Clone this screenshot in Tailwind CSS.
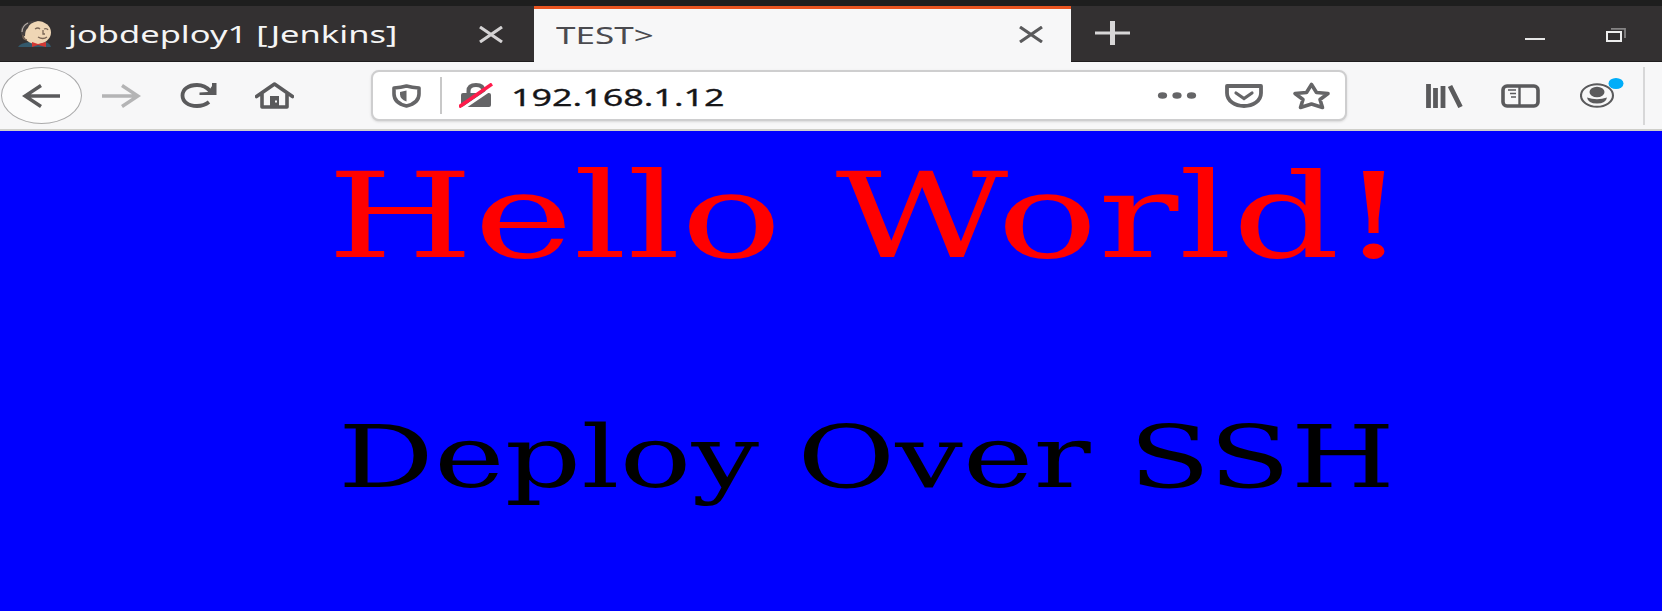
<!DOCTYPE html>
<html lang="en">
<head>
<meta charset="utf-8">
<title>TEST&gt;</title>
<script src="https://cdn.jsdelivr.net/npm/@tailwindcss/browser@4"></script>
</head>
<body class="w-[1662px] h-[611px] overflow-hidden bg-[#0000ff] font-['Noto_Sans',sans-serif] flex flex-col">
<header class="shrink-0 h-[62px] bg-[#333031] border-t-[6px] border-[#1e1e1e] flex">
  <div class="w-[534px] border-b border-[#1f1d1e] flex items-center pl-[18px]">
    <svg class="w-[34px] h-[28px] shrink-0" viewBox="0 0 34 28" preserveAspectRatio="none">
      <path d="M0 27Q2 23 12 22L27 22Q32 23 33 27Z" fill="#33586b"/>
      <ellipse cx="19" cy="12.5" rx="14" ry="11.5" fill="#efd6b5"/>
      <path d="M3 14Q1 5 10 2Q15 0 20 1Q11 3 10 8Q7 10 7 16Q4 17 3 14Z" fill="#454040"/>
      <path d="M4 12Q4 6 10 3" fill="none" stroke="#b5aca6" stroke-width="1.2"/>
      <path d="M5 15Q4 19 9 20M17 9q3-2 5 0M26 9q3-1 4 1M25 10v4h2M20 17q5 3 9 0" fill="none" stroke="#7a6555" stroke-width="1.3"/>
      <path d="M14 22l6 2 8-2v5l-8-2-6 2z" fill="#d33833"/>
    </svg>
    <span class="w-[330px] ml-[16px] mt-[1px] whitespace-nowrap text-[24px] leading-[32px] text-[#f5f5f5]"><span class="inline-block origin-left scale-x-[1.437]">jobdeploy1 [Jenkins]</span></span>
    <svg class="ml-[81px] mt-[1px] w-[24px] h-[17px] shrink-0" viewBox="0 0 24 17"><path d="M1 1L23 16M23 1L1 16" stroke="#d4d2d3" stroke-width="3.1"/></svg>
  </div>
  <div class="w-[537px] bg-[#f7f7f8] border-t-[3px] border-[#e95420] flex items-center pl-[22px] pb-1">
    <span class="w-[440px] mt-[2px] whitespace-nowrap text-[24px] leading-[32px] text-[#4a4a4f]"><span class="inline-block origin-left scale-x-[1.46]">TEST&gt;</span></span>
    <svg class="ml-[23px] mt-[2px] w-[24px] h-[17px] shrink-0" viewBox="0 0 24 17"><path d="M1 1L23 16M23 1L1 16" stroke="#5a5a5c" stroke-width="3.1"/></svg>
  </div>
  <div class="flex-1 border-b border-[#1f1d1e] flex items-start">
    <svg class="ml-[24px] mt-[15px] w-[35px] h-[24px]" viewBox="0 0 35 24"><path d="M0 12H35" stroke="#d8d6d7" stroke-width="3"/><path d="M17.500 0V24" stroke="#d8d6d7" stroke-width="5"/></svg>
    <div class="ml-[395px] mt-[32px] w-[20px] h-[2px] bg-[#e6e6e6]"></div>
    <svg class="ml-[61px] mt-[22px] w-[20px] h-[14px]" viewBox="0 0 20 14"><path d="M5 .8H19V10" fill="none" stroke="#858384" stroke-width="1.800"/><path d="M1 4H15V13H1Z" fill="none" stroke="#ededed" stroke-width="2"/></svg>
  </div>
</header>
<nav class="shrink-0 h-[69px] bg-[#f7f7f8] border-b-2 border-[#cfcfca] flex items-center text-[#5a5a5c]">
  <div class="ml-[1px] w-[81px] h-[57px] rounded-[50%] border border-[#aaaaab] bg-[#fcfcfc] flex items-center justify-center shrink-0">
    <svg class="w-[39px] h-[24px]" viewBox="0 0 39 24"><path d="M19 1.500L3 12L19 22.500M3 12H38" fill="none" stroke="currentColor" stroke-width="3.500"/></svg>
  </div>
  <svg class="ml-[20px] w-[39px] h-[24px] shrink-0 text-[#b4b4b5]" viewBox="0 0 39 24"><path d="M20 1.500L36 12L20 22.500M36 12H0" fill="none" stroke="currentColor" stroke-width="3.500"/></svg>
  <svg class="ml-[39px] w-[38px] h-[25px] shrink-0" viewBox="0 0 38 25"><path d="M29 19Q24 23 17 23C8 23 2.500 18.500 2.500 12.500S8 2 17 2Q25 2 30 8" fill="none" stroke="currentColor" stroke-width="3.800"/><path d="M36.500 0V12H19.500V9.500L28 9L32 3V0Z" fill="currentColor"/></svg>
  <svg class="ml-[37px] w-[39px] h-[27px] shrink-0" viewBox="0 0 39 27"><path d="M1.500 14.500L19.500 2L37.500 14.500M7 11V25H32V11" fill="none" stroke="currentColor" stroke-width="3.600" stroke-linejoin="round" stroke-linecap="round"/><path d="M15 25V14H24V25Z" fill="currentColor"/><path d="M20 18.500h2v2h-2z" fill="#f7f7f8"/></svg>
  <div class="ml-[77px] w-[976px] h-[51px] shrink-0 rounded-[8px] border-2 border-[#cececf] bg-white shadow-sm flex items-center text-[#656567]">
    <svg class="ml-[19px] w-[29px] h-[24px] shrink-0" viewBox="0 0 29 24"><path d="M2 4Q9 3.500 14.500 2Q20 3.500 27 4V10Q27 19 14.500 22Q2 19 2 10Z" fill="none" stroke="currentColor" stroke-width="3.600" stroke-linejoin="round"/><path d="M14.500 6.500V17.500Q8 15 8 10.500V8Z" fill="currentColor"/></svg>
    <div class="ml-[19px] w-[2px] h-[37px] bg-[#c8c8c8]"></div>
    <svg class="ml-[17px] w-[34px] h-[25px] shrink-0" viewBox="0 0 34 25"><path d="M9.500 12V8Q9.500 2 17 2T24.500 8V12" fill="none" stroke="currentColor" stroke-width="4"/><rect x="2" y="10" width="30" height="14" rx="2" fill="currentColor"/><path d="M3 26L36 3.500" stroke="white" stroke-width="3"/><path d="M0 24L33 1" stroke="#ff1b4b" stroke-width="3.500"/></svg>
    <span class="ml-[18px] w-[615px] mt-[2px] whitespace-nowrap text-[24px] leading-[32px] text-[#161618] [-webkit-text-stroke:0.3px_#161618]"><span class="inline-block origin-left scale-x-[1.495]">192.168.1.12</span></span>
    <svg class="ml-[31px] w-[40px] h-[7px] shrink-0" viewBox="0 0 40 7"><g fill="currentColor"><ellipse cx="5.500" cy="3.500" rx="4.600" ry="3.300"/><ellipse cx="20" cy="3.500" rx="4.600" ry="3.300"/><ellipse cx="34.500" cy="3.500" rx="4.600" ry="3.300"/></g></svg>
    <svg class="ml-[28px] w-[38px] h-[24px] shrink-0" viewBox="0 0 38 24"><path d="M2 2H36V9C36 17 28 22 19 22S2 17 2 9Z" fill="none" stroke="currentColor" stroke-width="3.800" stroke-linejoin="round"/><path d="M11 9L19 14.500L27 9" fill="none" stroke="currentColor" stroke-width="3.200" stroke-linecap="round"/></svg>
    <svg class="ml-[29px] w-[39px] h-[28px] shrink-0" viewBox="0 0 39 28"><path d="M19.500 2.500L24.500 10.500L36 11.500L28 17.500L30.500 25.500L19.500 22L8.500 25.500L11 17.500L3 11.500L14.500 10.500Z" fill="none" stroke="currentColor" stroke-width="3.600" stroke-linejoin="round"/></svg>
  </div>
  <svg class="ml-[79px] w-[38px] h-[24px] shrink-0" viewBox="0 0 38 24"><path d="M2.500 0V24M9.500 4V24M17 2V24M24 2L34.500 23" fill="none" stroke="currentColor" stroke-width="4.800"/></svg>
  <svg class="ml-[37px] w-[39px] h-[24px] shrink-0" viewBox="0 0 39 24"><rect x="2" y="2" width="35" height="20" rx="4" fill="none" stroke="currentColor" stroke-width="3.600"/><path d="M18.500 2V22" stroke="currentColor" stroke-width="2.400"/><path d="M7 6H15M9 9.500H15M10 13H15" stroke="currentColor" stroke-width="1.500"/></svg>
  <svg class="ml-[40px] w-[46px] h-[35px] mb-[6px] shrink-0" viewBox="0 0 46 35"><ellipse cx="17" cy="20.500" rx="16" ry="11.300" fill="none" stroke="currentColor" stroke-width="2.100"/><ellipse cx="17" cy="17" rx="7.500" ry="5.300" fill="currentColor"/><path d="M7 22.500Q17 26 27 22.500Q26 28.500 17 28.500T7 22.500Z" fill="currentColor"/><ellipse cx="36" cy="8.500" rx="7.500" ry="5.500" fill="#00adf9"/></svg>
  <div class="ml-[17px] w-[2px] h-[58px] bg-[#d7d7d8]"></div>
</nav>
<main class="flex-1 bg-[#0000ff] font-['DejaVu_Serif',serif] whitespace-nowrap">
  <h1 class="mt-[16px] ml-[327px] h-[138px] text-[118px] leading-[138px] text-[#ff0000]"><span class="inline-block origin-left scale-x-[1.425]">Hello World!</span></h1>
  <p class="mt-[122px] ml-[338px] h-[100px] text-[86px] leading-[100px] text-black"><span class="inline-block origin-left scale-x-[1.391]">Deploy Over SSH</span></p>
</main>
</body>
</html>
